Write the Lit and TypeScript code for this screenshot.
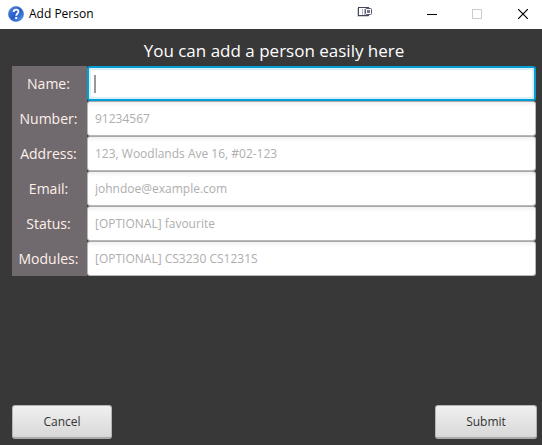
import { LitElement, html, css } from "lit";
import { customElement, state } from "lit/decorators.js";
import { classMap } from "lit/directives/class-map.js";

interface Field {
  id: string;
  label: string;
  hint: string;
}

const FIELDS: Field[] = [
  { id: "name", label: "Name:", hint: "" },
  { id: "number", label: "Number:", hint: "91234567" },
  { id: "address", label: "Address:", hint: "123, Woodlands Ave 16, #02-123" },
  { id: "email", label: "Email:", hint: "johndoe@example.com" },
  { id: "status", label: "Status:", hint: "[OPTIONAL] favourite" },
  { id: "modules", label: "Modules:", hint: "[OPTIONAL] CS3230 CS1231S" },
];

@customElement("title-bar")
export class TitleBar extends LitElement {
  static styles = css`
    :host {
      display: flex;
      align-items: center;
      height: 29px;
      padding-left: 8px;
      background: #fff;
      color: #000;
      font: 12px/16px "Open Sans", "Noto Sans", sans-serif;
    }
    svg {
      display: block;
    }
    .help {
      margin-bottom: 2px;
    }
    .title {
      flex: 1;
      margin: 0 0 2px 5px;
      font-size: 12px;
      font-weight: 400;
    }
    .capture {
      margin: 0 36px 6px 0;
    }
    button {
      display: grid;
      place-items: center;
      width: 45px;
      height: 27px;
      margin-bottom: 2px;
      padding: 0;
      border: 0;
      background: none;
    }
    .close {
      width: 47px;
      margin-right: -4px;
    }
  `;

  render() {
    return html`
      <svg class="help" width="16" height="16" viewBox="0 0 16 16" aria-hidden="true">
        <defs>
          <linearGradient id="ball" x1="0" y1="0" x2="1" y2="1">
            <stop offset="0" stop-color="#5a8ce4" />
            <stop offset="0.5" stop-color="#2459c8" />
            <stop offset="1" stop-color="#5ba0f2" />
          </linearGradient>
        </defs>
        <circle cx="8" cy="8" r="7.6" fill="url(#ball)" stroke="#4a7acb" stroke-width="0.6" />
        <path d="M5.6 6C5.7 4.300 6.700 3.600 8.100 3.600c1.500 0 2.400.8 2.400 2 0 1.900-2.300 1.900-2.300 4.200" fill="none" stroke="#fff" stroke-width="1.8" />
        <rect x="7.200" y="11" width="2" height="2" fill="#fff" />
      </svg>
      <h1 class="title">Add Person</h1>
      <svg class="capture" width="16" height="12" viewBox="0 0 16 12" aria-hidden="true">
        <path d="M0.5 2v8.500h11" fill="none" stroke="#cfcfd6" />
        <rect x="1.5" y="1.5" width="10" height="8" fill="#fff" stroke="#45455c" />
        <path d="M5.5 3v6M7.5 3v6" stroke="#b4b4c0" />
        <rect x="8.5" y="2.5" width="6" height="6" rx="1" fill="#fff" stroke="#55556c" />
        <rect x="10" y="4" width="3" height="3" fill="#77778a" />
      </svg>
      <button type="button" aria-label="Minimize">
        <svg width="10" height="10" viewBox="0 0 10 10"><path d="M0 5.5h10" stroke="#000" /></svg>
      </button>
      <button type="button" aria-label="Maximize" disabled>
        <svg width="10" height="10" viewBox="0 0 10 10">
          <rect x="0.5" y="0.5" width="9" height="9" fill="none" stroke="#ccc" />
        </svg>
      </button>
      <button class="close" type="button" aria-label="Close">
        <svg width="10" height="10" viewBox="0 0 10 10"><path d="M0 0l10 10M10 0L0 10" stroke="#000" stroke-width="1.2" /></svg>
      </button>
    `;
  }
}

@customElement("app-root")
export class AppRoot extends LitElement {
  static styles = css`
    :host {
      display: flex;
      flex-direction: column;
      min-height: 100vh;
      background: #383838;
      font-family: "Open Sans", "Noto Sans", sans-serif;
    }
    form {
      flex: 1;
      display: flex;
      flex-direction: column;
      padding: 9px 6px 6px 12px;
    }
    .heading {
      margin: 0 0 2px;
      color: #fff;
      font-size: 17px;
      font-weight: 400;
      line-height: 26px;
      text-align: center;
    }
    .row {
      display: grid;
      grid-template-columns: 75px 1fr;
      height: 35px;
    }
    label {
      display: grid;
      place-items: center;
      padding-right: 2px;
      background: #706a6e;
      color: #fff0ea;
      font-size: 14px;
      line-height: 20px;
    }
    input {
      min-width: 0;
      box-sizing: border-box;
      padding: 0 7px;
      border: 1px solid #b8b8b8;
      border-top-color: #a8a8a8;
      border-radius: 3px;
      outline: 0;
      background: linear-gradient(#f1f1f1, #fff 5px);
      color: #333;
      font: 12px/18px "Open Sans", "Noto Sans", sans-serif;
    }
    input::placeholder {
      color: #aeaeae;
      opacity: 1;
    }
    input.active {
      border: 2px solid #039ed3;
      box-shadow: inset 0 0 0 2px #d9f0f8;
      background: #fff;
      caret-color: transparent;
    }
    input.active:placeholder-shown {
      background: linear-gradient(#999, #999) 5px center / 2px 18px no-repeat #fff;
    }
    .actions {
      display: flex;
      justify-content: space-between;
      margin: auto -1px 0 0;
    }
    .actions button {
      width: 100px;
      height: 34px;
      padding: 0;
      border: 1px solid #b5b5b5;
      border-bottom: 2px solid #aaa;
      border-radius: 3px;
      background: linear-gradient(#f0f0f0, #d8d8d8);
      color: #333;
      font: 12px/18px "Open Sans", "Noto Sans", sans-serif;
    }
    .actions .submit {
      width: 102px;
    }
  `;

  @state() private active = "name";

  render() {
    return html`
      <title-bar></title-bar>
      <form @submit=${(e: Event) => e.preventDefault()}>
        <h2 class="heading">You can add a person easily here</h2>
        ${FIELDS.map(
          (f) => html`
            <div class="row">
              <label for=${f.id}>${f.label}</label>
              <input
                id=${f.id}
                type="text"
                autocomplete="off"
                class=${classMap({ active: this.active === f.id })}
                placeholder=${f.hint || " "}
                @focus=${() => (this.active = f.id)}
              />
            </div>
          `
        )}
        <div class="actions">
          <button type="button">Cancel</button>
          <button class="submit" type="submit">Submit</button>
        </div>
      </form>
    `;
  }
}
